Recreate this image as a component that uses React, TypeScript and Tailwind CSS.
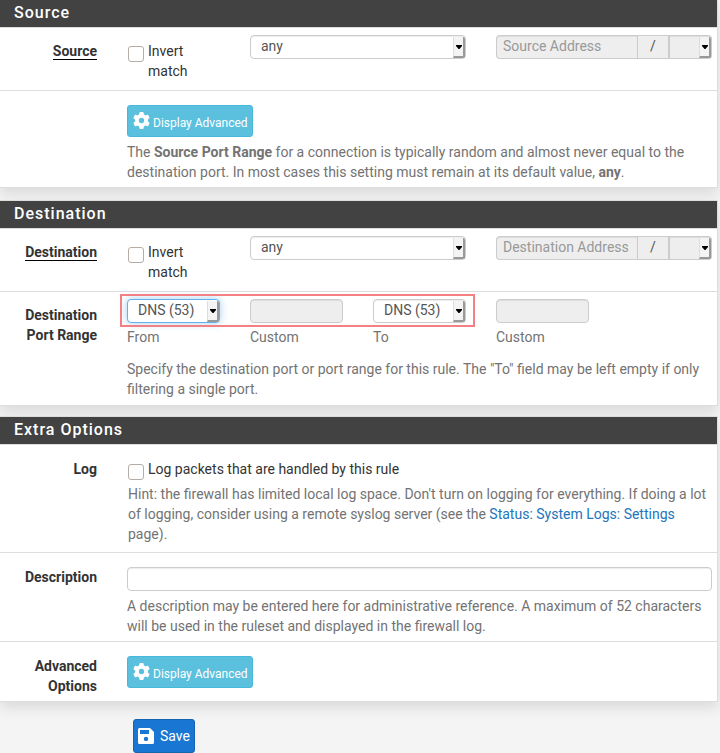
import type { ReactNode } from "react";
import { FaGear } from "react-icons/fa6";

const inputBase =
  "h-6 w-full min-w-0 border border-[#ccc] px-1.5 pb-0.5 text-sm text-[#555] shadow-[inset_0_1px_1px_rgba(0,0,0,0.075)] outline-none placeholder:text-[#999] disabled:bg-[#eee]";

function Panel({ title, className = "", children }: { title: string; className?: string; children: ReactNode }) {
  return (
    <section className={`mr-0.5 border-r border-b border-[#ddd] bg-white shadow-[0_6px_12px_rgba(0,0,0,0.1)] ${className}`}>
      <h2 className="h-7 border-b border-[#ddd] bg-[#424242] pl-3.5 text-base leading-[26px] font-medium tracking-[1px] text-white">
        {title}
      </h2>
      <div className="divide-y divide-[#ddd]">{children}</div>
    </section>
  );
}

function Row({ label, labelClass = "pt-[13px]", className, children }: { label?: ReactNode; labelClass?: string; className: string; children: ReactNode }) {
  return (
    <div className="grid grid-cols-6 gap-x-[30px] pr-[5px] pl-1">
      <div className={`text-right font-bold text-[#333] ${labelClass}`}>{label}</div>
      <div className={`col-span-5 ${className}`}>{children}</div>
    </div>
  );
}

function Underlined({ children }: { children: ReactNode }) {
  return <span className="border-b border-black">{children}</span>;
}

function Select({
  id,
  name,
  value = "",
  disabled,
  focused,
  joined,
}: {
  id?: string;
  name: string;
  value?: string;
  disabled?: boolean;
  focused?: boolean;
  joined?: boolean;
}) {
  return (
    <div className="relative w-full">
      <select
        id={id}
        aria-label={name}
        disabled={disabled}
        defaultValue={value}
        className={`block h-6 w-full appearance-none border pr-3.5 pb-0.5 pl-2.5 text-sm leading-5 text-[#555] opacity-100 outline-none disabled:bg-[#eee] ${
          joined ? "rounded-r border-l-0" : "rounded"
        } ${
          focused
            ? "border-[#66afe9] bg-white shadow-[0_0_8px_rgba(102,175,233,0.6)]"
            : "border-[#ccc] bg-white shadow-[inset_0_1px_1px_rgba(0,0,0,0.075)]"
        }`}
      >
        <option value={value}>{value}</option>
      </select>
      <span className="pointer-events-none absolute top-0.5 right-px bottom-px flex w-3 items-center justify-center rounded-r-xs border-r-2 border-b-2 border-l border-[#999] border-l-[#ddd] bg-[#f4f4f4]">
        <svg viewBox="0 0 6 4" className="h-1 w-1.5" fill="#000" aria-hidden="true">
          <path d="M0 0h6v1L3.500 4h-1L0 1z" />
        </svg>
      </span>
    </div>
  );
}

function Check({ id, children }: { id: string; children: ReactNode }) {
  return (
    <label htmlFor={id} className="flex items-start gap-1 pl-px text-[#333]">
      <input
        id={id}
        type="checkbox"
        className="mt-[5px] size-4 shrink-0 appearance-none rounded-[3px] border border-[#b5aca6] bg-white checked:bg-[#1976d2]"
      />
      <span>{children}</span>
    </label>
  );
}

function AddressRow({ label }: { label: string }) {
  const key = label.toLowerCase();
  return (
    <Row label={<Underlined>{label}</Underlined>} className="grid grid-cols-5 gap-x-[30px] pt-[7px] pb-[9px]">
      <div className="pt-1.5">
        <Check id={`${key}-invert`}>Invert match</Check>
      </div>
      <div className="col-span-2">
        <Select name={label} value="any" />
      </div>
      <div className="col-span-2 flex h-6">
        <input type="text" disabled aria-label={`${label} Address`} placeholder={`${label} Address`} className={`${inputBase} flex-1 rounded-l border-r-0`} />
        <span className="w-[33px] shrink-0 border border-r-2 border-[#ccc] bg-[#eee] text-center leading-5 text-[#555]">/</span>
        <div className="w-[42px] shrink-0">
          <Select name={`${label} mask`} disabled joined />
        </div>
      </div>
    </Row>
  );
}

function AdvancedButton() {
  return (
    <button type="button" className="flex h-8 items-center gap-[3px] rounded-[3px] border border-[#46b8da] bg-[#5bc0de] pr-1 pl-[5px] text-xs text-white">
      <FaGear className="mb-0.5 size-[17px] shrink-0" aria-hidden="true" />
      <span className="pt-1">Display Advanced</span>
    </button>
  );
}

export default function App() {
  return (
    <main className="min-h-screen bg-[#f4f4f4] font-[Roboto,'Liberation_Sans',sans-serif] text-sm leading-5 text-[#737373]">
      <Panel title="Source">
        <AddressRow label="Source" />
        <Row className="pt-3.5 pb-[5px]">
          <AdvancedButton />
          <p className="mt-[5px]">
            The <b>Source Port Range</b> for a connection is typically random and almost never equal to the destination port. In most
            cases this setting must remain at its default value, <b>any</b>.
          </p>
        </Row>
      </Panel>

      <Panel title="Destination" className="mt-3 border-t">
        <AddressRow label="Destination" />
        <Row label="Destination Port Range" className="pt-[7px] pb-1.5">
          <div className="grid grid-cols-5 gap-x-[30px]">
            <div className="col-start-1 row-start-1">
              <Select id="port-from" name="From" value="DNS (53)" focused />
              <label htmlFor="port-from" className="mt-1 block">From</label>
            </div>
            <div className="col-start-2 row-start-1">
              <input id="from-custom" type="text" disabled className={`${inputBase} block rounded`} />
              <label htmlFor="from-custom" className="mt-1 block">Custom</label>
            </div>
            <div className="col-start-3 row-start-1">
              <Select id="port-to" name="To" value="DNS (53)" />
              <label htmlFor="port-to" className="mt-1 block">To</label>
            </div>
            <div className="col-start-4 row-start-1">
              <input id="to-custom" type="text" disabled className={`${inputBase} block rounded`} />
              <label htmlFor="to-custom" className="mt-1 block">Custom</label>
            </div>
            <div className="pointer-events-none z-10 col-span-3 col-start-1 row-start-1 -mt-[5px] -mr-[9px] -ml-[7px] h-[33px] self-start border-2 border-[#f58084]" />
          </div>
          <p className="mt-3">
            Specify the destination port or port range for this rule. The "To" field may be left empty if only filtering a single port.
          </p>
        </Row>
      </Panel>

      <Panel title="Extra Options" className="mt-2.5 border-t">
        <Row label="Log" labelClass="pt-3.5" className="pt-3.5 pb-2">
          <Check id="log">Log packets that are handled by this rule</Check>
          <p className="mt-1 pl-px">
            Hint: the firewall has limited local log space. Don't turn on logging for everything. If doing a lot of logging, consider
            using a remote syslog server (see the{" "}
            <a href="#settings" className="text-[#2275bb]">Status: System Logs: Settings</a> page).
          </p>
        </Row>
        <Row label={<label htmlFor="description">Description</label>} labelClass="pt-3.5" className="pt-3.5 pb-[5px]">
          <input id="description" type="text" className={`${inputBase} block rounded bg-white`} />
          <p className="mt-[5px]">
            A description may be entered here for administrative reference. A maximum of 52 characters will be used in the ruleset and
            displayed in the firewall log.
          </p>
        </Row>
        <Row label="Advanced Options" labelClass="pt-3.5 pb-[5px]" className="pt-3.5">
          <AdvancedButton />
        </Row>
      </Panel>

      <button type="submit" className="mt-[17px] ml-[133px] flex h-[34px] items-center gap-1.5 rounded-[3px] border border-[#1565b0] bg-[#1976d2] px-1 text-sm text-white">
        <svg viewBox="0 0 16 16" className="size-4" aria-hidden="true">
          <path fill="#fff" fillRule="evenodd" d="M1.500 0H12l4 4v10.500a1.500 1.500 0 0 1-1.500 1.500h-13A1.500 1.500 0 0 1 0 14.500v-13A1.500 1.500 0 0 1 1.500 0zM2 2v4h9V2zM8 8.700a2.200 2.200 0 1 0 0 4.400 2.200 2.200 0 0 0 0-4.400z" />
        </svg>
        Save
      </button>
    </main>
  );
}
